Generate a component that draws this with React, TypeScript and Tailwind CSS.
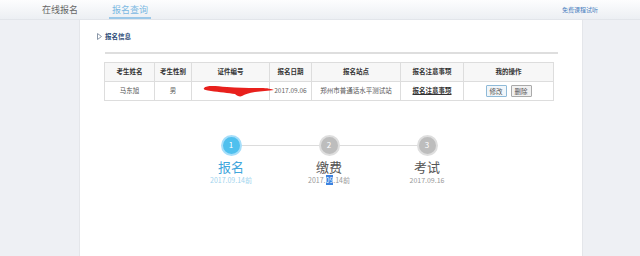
import React from 'react';

const cols = [
  { label: '考生姓名', w: 'w-[50px]' },
  { label: '考生性别', w: 'w-[37px]' },
  { label: '证件编号', w: 'w-[78px]' },
  { label: '报名日期', w: 'w-[42px]' },
  { label: '报名站点', w: 'w-[89px]' },
  { label: '报名注意事项', w: 'w-[63px]' },
  { label: '我的操作', w: 'w-[90px]' },
];

const steps = [
  { n: 1, name: '报名', date: '2017.09.14前', active: true },
  { n: 2, name: '缴费', date: '', active: false },
  { n: 3, name: '考试', date: '2017.09.16', active: false },
];

const font = { fontFamily: '"Noto Sans CJK SC", "Liberation Sans", sans-serif' };

const Step: React.FC<{ step: typeof steps[number]; first: boolean; last: boolean }> = ({ step, first, last }) => (
  <div className="flex flex-col items-center w-[98px]">
    <div className="flex items-center w-full">
      <div className={`flex-1 h-px ${first ? '' : 'bg-[#dcdcdc]'}`} />
      <div
        className={`w-[21px] h-[21px] rounded-full border-2 flex items-center justify-center text-[8px] text-white ${
          step.active ? 'bg-[#4fc0ee] border-[#a5defa]' : 'bg-[#bdbdbd] border-[#dedede]'
        }`}
      >
        {step.n}
      </div>
      <div className={`flex-1 h-px ${last ? '' : 'bg-[#dcdcdc]'}`} />
    </div>
    <div className={`mt-[2px] text-[13px] leading-[17px] ${step.active ? 'text-[#3fa6dc]' : 'text-[#555]'}`}>
      {step.name}
    </div>
    <div className={`text-[7px] leading-[10px] ${step.active ? 'text-[#9fd4ee]' : 'text-[#999]'}`}>
      {step.n === 2 ? (
        <>
          2017.<span className="bg-[#3b82e0] text-white">09</span>.14前
        </>
      ) : (
        step.date
      )}
    </div>
  </div>
);

export default function App() {
  return (
    <div className="w-[640px] h-[256px] overflow-hidden bg-[#eef0f4] flex flex-col" style={font}>
      {/* top bar */}
      <div className="h-[20px] shrink-0 bg-gradient-to-b from-[#fdfdfe] to-[#eceff3] border-b border-[#e2e5ea] flex items-stretch">
        <div className="ml-[42px] flex items-center text-[9px] text-[#666]">在线报名</div>
        <div className="ml-[34px] relative flex items-center text-[9px] text-[#7bb8e2]">
          报名查询
          <div className="absolute left-[-3px] right-[-3px] bottom-0 h-[2px] bg-[#9cc8e8]" />
        </div>
        <div className="ml-auto mr-[42px] flex items-center text-[6px] text-[#4a7fc0]">免费课程试听</div>
      </div>

      {/* panel */}
      <div className="ml-[79px] w-[504px] flex-1 bg-white border-x border-[#e4e6ea]">
        <div className="ml-[17px] mt-[12px] flex items-center gap-[3px]">
          <svg width="5" height="7" viewBox="0 0 5 7">
            <path d="M0.5 0.5 L4.5 3.5 L0.5 6.5 Z" fill="none" stroke="#8a97a8" strokeWidth="1" />
          </svg>
          <span className="text-[6.5px] font-bold text-[#2d4c78]">报名信息</span>
        </div>
        <div className="ml-[25px] w-[453px] h-[2px] bg-[#dedede] mt-[10px]" />

        <table className="ml-[24px] mt-[8px] border-collapse text-[6.5px] text-[#555] table-fixed w-[449px]">
          <thead>
            <tr className="h-[19px] bg-[#f7f7f7]">
              {cols.map(c => (
                <th key={c.label} className={`${c.w} border border-[#dddddd] font-bold text-[#333]`}>
                  {c.label}
                </th>
              ))}
            </tr>
          </thead>
          <tbody>
            <tr className="h-[19px]">
              <td className="border border-[#dddddd] text-center">马东旭</td>
              <td className="border border-[#dddddd] text-center">男</td>
              <td className="border border-[#dddddd] relative">
                <svg className="absolute left-[11px] top-[2px] overflow-visible" width="72" height="14" viewBox="0 0 72 14">
                  <path
                    d="M1 4 C4 1 12 2 24 3 C36 4 48 4 58 4 C64 4 69 5 71 6 C66 7 58 7 52 8 C46 9 42 10 39 12 C37 13 34 12 32 10 C26 9 16 8 8 7 C3 6 0 6 1 4 Z"
                    fill="#e8201c"
                  />
                </svg>
              </td>
              <td className="border border-[#dddddd] text-center text-[#666]">2017.09.06</td>
              <td className="border border-[#dddddd] text-center">郑州市普通话水平测试站</td>
              <td className="border border-[#dddddd] text-center font-bold underline text-[#333]">报名注意事项</td>
              <td className="border border-[#dddddd]">
                <div className="flex justify-center gap-[4px]">
                  <span className="px-[3px] leading-[10px] border border-[#8fbad8] bg-[#f1f6fa] rounded-[1px]">修改</span>
                  <span className="px-[3px] leading-[10px] border border-[#aaaaaa] bg-[#f1f1f1] rounded-[1px]">删除</span>
                </div>
              </td>
            </tr>
          </tbody>
        </table>

        <div className="ml-[102px] mt-[34px] flex">
          {steps.map((s, i) => (
            <Step key={s.n} step={s} first={i === 0} last={i === steps.length - 1} />
          ))}
        </div>
      </div>
    </div>
  );
}
